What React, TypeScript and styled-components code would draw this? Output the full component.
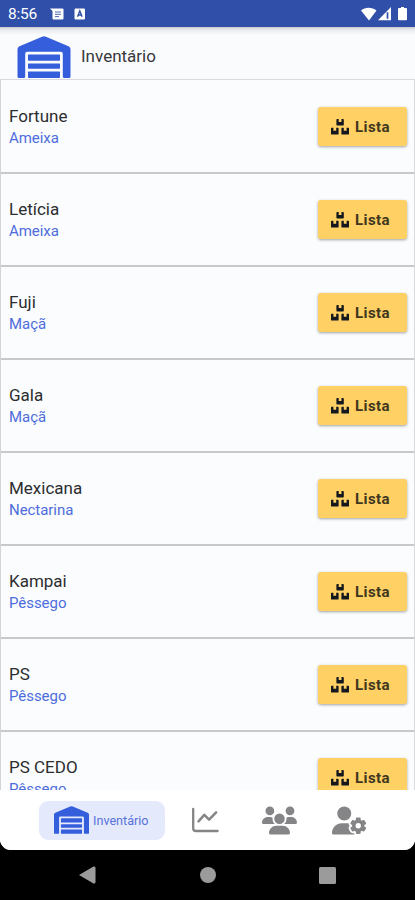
import React from "react";
import styled, { createGlobalStyle } from "styled-components";
import { FaUsers, FaUserGear } from "react-icons/fa6";

const GlobalStyle = createGlobalStyle`
  * { box-sizing: border-box; }
  body { margin: 0; background: #000; font-family: Roboto, sans-serif; }
`;

const Screen = styled.div`
  width: 415px;
  height: 900px;
  display: flex;
  flex-direction: column;
  background: #000;
  overflow: hidden;
`;

const StatusBar = styled.div`
  height: 27px;
  flex: none;
  display: flex;
  align-items: center;
  padding: 0 7px 0 8px;
  background: #2f4fa8;
  color: #fff;
`;

const Clock = styled.span`
  width: 42px;
  font-size: 15.5px;
  line-height: 26px;
  padding-top: 1px;
  letter-spacing: -0.2px;
`;

const StatusIcons = styled.div`
  display: flex;
  flex: 1;
  gap: 10px;
`;

const SignalIcons = styled.div`
  display: flex;
  align-items: center;
`;

const AppBody = styled.main`
  flex: none;
  height: 823px;
  display: flex;
  flex-direction: column;
  background: #fff;
  border-radius: 0 0 11px 11px;
  overflow: hidden;
`;

const Header = styled.header`
  height: 52px;
  flex: none;
  display: flex;
  align-items: center;
  padding: 8px 0 0 17px;
  background: linear-gradient(#c9cbd0 0, #ebecef 3px, #fafbfd 8px);
`;

const Title = styled.h1`
  margin: 0 0 0 10px;
  font-size: 17px;
  font-weight: 400;
  line-height: 20px;
  padding-bottom: 3px;
  color: #37383b;
`;

const List = styled.div`
  height: 711px;
  flex: none;
  overflow: hidden;
  background: #fafcfe;
  border-top: 1.5px solid #d9dadd;
  border-left: 1px solid #d3d4d7;
  border-right: 1px solid #d9dadd;
  padding-top: 1px;
`;

const Row = styled.div`
  height: 93px;
  display: flex;
  align-items: center;
  justify-content: space-between;
  padding: 0 7px 0 8px;
  border-bottom: 2px solid #c8c9cc;
`;

const Name = styled.div`
  font-size: 17px;
  line-height: 22px;
  color: #2d2d2f;
`;

const Fruit = styled.div`
  font-size: 15px;
  line-height: 22px;
  letter-spacing: -0.05px;
  color: #4e6cdc;
`;

const ListButton = styled.button`
  width: 89px;
  height: 39px;
  display: flex;
  align-items: center;
  gap: 6px;
  padding: 0 0 0 13px;
  border: 0;
  border-radius: 3px;
  background: #ffd063;
  color: #15171e;
  box-shadow: 0 1px 3px rgba(0, 0, 0, 0.36);
  font: 700 15px/20px Roboto, sans-serif;
  letter-spacing: 0.4px;
`;

const ButtonLabel = styled.span`
  color: #40371f;
`;

const TabBar = styled.nav`
  height: 60px;
  flex: none;
  display: flex;
  align-items: center;
  padding: 0 0 0 39px;
  background: #fff;
  color: #858587;
`;

const ActiveTab = styled.div`
  width: 126px;
  height: 39px;
  display: flex;
  align-items: center;
  gap: 4px;
  padding-left: 15px;
  border-radius: 9px;
  background: #e4eafc;
  color: #5872d9;
  font-size: 12.6px;
`;

const Tab = styled.div<{ $gap: number }>`
  display: flex;
  margin-left: ${(p) => p.$gap}px;
`;

const SystemNav = styled.div`
  flex: 1;
  display: flex;
  align-items: center;
  padding-left: 79px;
`;

const NavButton = styled.div<{ $gap: number }>`
  display: flex;
  margin-right: ${(p) => p.$gap}px;
`;

const WarehouseSvg = styled.svg`
  flex: none;
  fill: #345edb;
`;

function Warehouse({ width, height }: { width: number; height: number }) {
  return (
    <WarehouseSvg width={width} height={height} viewBox="0 0 53 42">
      <path d="M2 10.2 24.6.7q1.9-.8 3.8 0L51 10.2q2 .9 2 3v27.3q0 1.5-1.5 1.5h-4.7q-1.5 0-1.5-1.5V17.7q0-2-2-2H9.7q-2 0-2 2v22.8q0 1.5-1.5 1.5H1.5Q0 42 0 40.5V13.2q0-2.1 2-3z" />
      <rect x="10.5" y="18.4" width="32" height="6.3" rx=".8" />
      <rect x="10.5" y="27.5" width="32" height="5.2" rx=".6" />
      <rect x="10.5" y="35.5" width="32" height="6.5" rx=".8" />
    </WarehouseSvg>
  );
}

function Boxes() {
  return (
    <svg width="18" height="16" viewBox="0 0 18 16" fill="currentColor">
      <path d="M6.1 0h1.6v3h2.8V0h1.6q.7 0 .7.7v5q0 .7-.7.7h-6q-.7 0-.7-.7v-5q0-.7.7-.7z" />
      <path d="M.7 8.8h1.7v3h2.8v-3h1.7q.7 0 .7.7v5.4q0 .7-.7.7H.7q-.7 0-.7-.7V9.500q0-.7.7-.7z" />
      <path d="M11.100 8.8h1.700v3h2.8v-3h1.700q.7 0 .7.7v5.400q0 .7-.7.7h-6.200q-.7 0-.7-.7V9.500q0-.7.7-.7z" />
    </svg>
  );
}

const items = [
  ["Fortune", "Ameixa"],
  ["Letícia", "Ameixa"],
  ["Fuji", "Maçã"],
  ["Gala", "Maçã"],
  ["Mexicana", "Nectarina"],
  ["Kampai", "Pêssego"],
  ["PS", "Pêssego"],
  ["PS CEDO", "Pêssego"],
];

export default function App() {
  return (
    <Screen>
      <GlobalStyle />
      <StatusBar>
        <Clock>8:56</Clock>
        <StatusIcons>
          <svg width="14" height="12" viewBox="0 0 14 12">
            <path fill="#fff" d="M0 .5h12.500a1 1 0 0 1 1 1v9a1 1 0 0 1-1 1h-9a1 1 0 0 1-1-1V3z" />
            <path stroke="#5269b4" d="M5 4h6M5 6.300h6M5 8.600h4" />
          </svg>
          <svg width="12" height="12" viewBox="0 0 12 12">
            <rect x=".5" y=".5" width="10.5" height="11" rx="1.2" fill="#fff" />
            <path d="M3.500 8.800 5.800 3l2.300 5.800M4.400 7h2.800" fill="none" stroke="#2f4fa8" strokeWidth="1.4" />
          </svg>
        </StatusIcons>
        <SignalIcons>
          <svg width="48" height="16" viewBox="0 0 48 16" fill="#fff">
            <path d="M1 4.600C5 .9 12 .9 16.500 4.600L9 14.500z" />
            <path d="M31 1v13.300H18z" />
            <path d="M27.500 6.200v6.600" stroke="#2f4fa8" strokeWidth="1.7" />
            <path d="M39 2h2V1h3v1h2q1 0 1 1v10.300q0 1-1 1h-7q-1 0-1-1V3q0-1 1-1z" />
          </svg>
        </SignalIcons>
      </StatusBar>
      <AppBody>
        <Header>
          <Warehouse width={54} height={42} />
          <Title>Inventário</Title>
        </Header>
        <List>
          {items.map(([name, fruit]) => (
            <Row key={name}>
              <div>
                <Name>{name}</Name>
                <Fruit>{fruit}</Fruit>
              </div>
              <ListButton>
                <Boxes />
                <ButtonLabel>Lista</ButtonLabel>
              </ListButton>
            </Row>
          ))}
        </List>
        <TabBar>
          <ActiveTab>
            <Warehouse width={35} height={28} />
            Inventário
          </ActiveTab>
          <Tab $gap={26}>
            <svg width="29" height="26" viewBox="0 0 29 26" fill="none" stroke="#858587" strokeLinecap="round" strokeLinejoin="round">
              <path strokeWidth="2.3" d="M2.200 1.800v19.400q0 2.800 2.800 2.800h21.600" />
              <path strokeWidth="2.5" d="m7.500 14.300 5.800-6.500 4.800 4.800 7-7.200" />
            </svg>
          </Tab>
          <Tab $gap={42}>
            <FaUsers size={35} />
          </Tab>
          <Tab $gap={35}>
            <FaUserGear size={35} />
          </Tab>
        </TabBar>
      </AppBody>
      <SystemNav>
        <NavButton $gap={104}>
          <svg width="17" height="18" viewBox="0 0 17 18">
            <path d="M0 9 14.500.500Q16.500 0 16.500 2v14q0 2-2 1.500z" fill="#9b9b9b" />
          </svg>
        </NavButton>
        <NavButton $gap={103}>
          <svg width="16" height="16" viewBox="0 0 16 16">
            <circle cx="8" cy="8" r="8" fill="#9b9b9b" />
          </svg>
        </NavButton>
        <NavButton $gap={0}>
          <svg width="17" height="17" viewBox="0 0 17 17">
            <rect width="17" height="17" rx="1.5" fill="#9b9b9b" />
          </svg>
        </NavButton>
      </SystemNav>
    </Screen>
  );
}
